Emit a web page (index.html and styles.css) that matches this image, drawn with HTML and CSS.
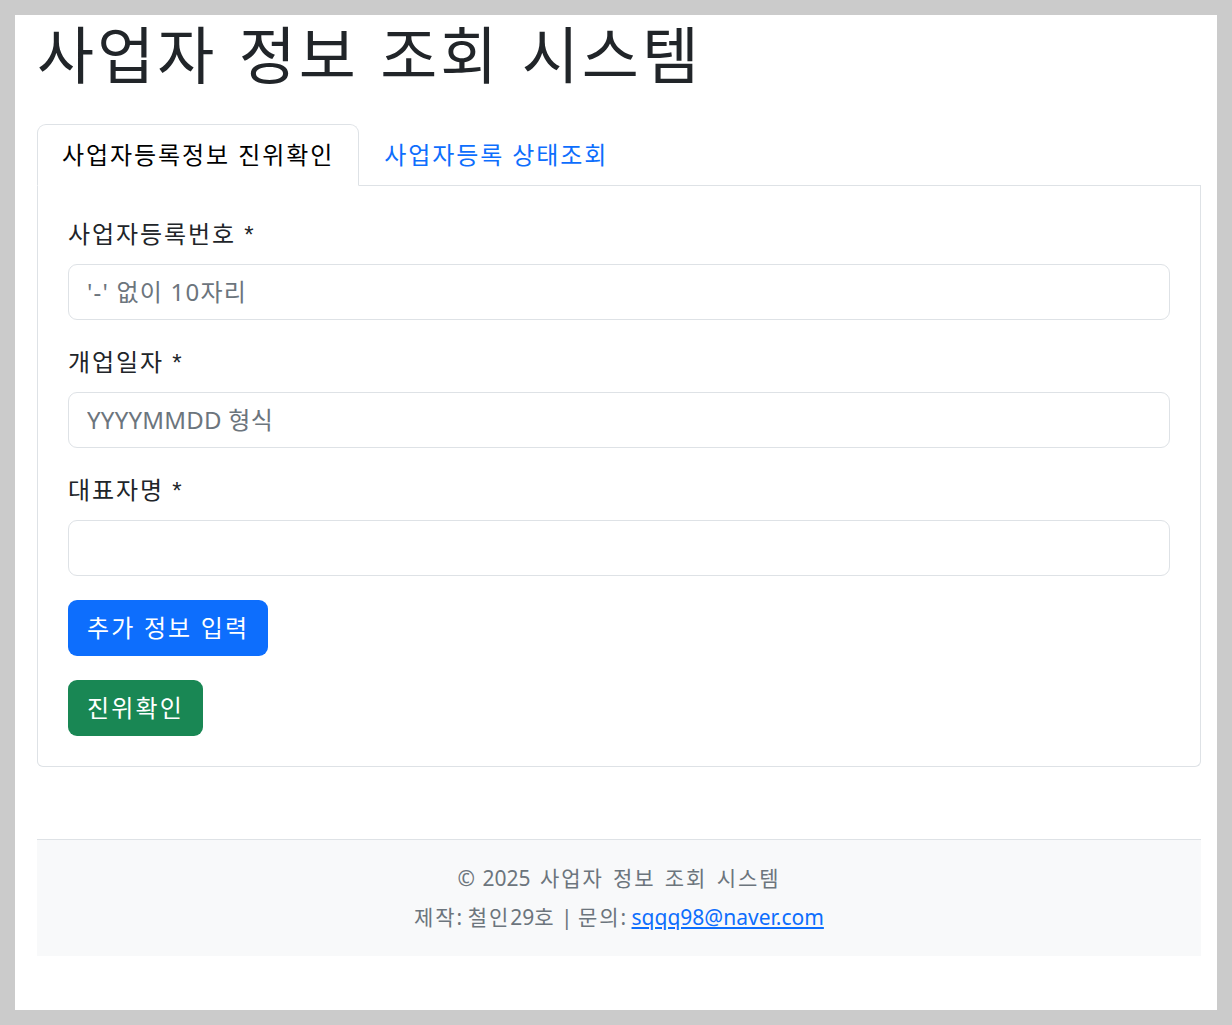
FILE: index.html
```html
<!DOCTYPE html>
<html lang="ko">
<head>
  <meta charset="UTF-8" />
  <title>사업자 정보 조회 시스템</title>
  <link rel="stylesheet" href="styles.css">
</head>
<body>
  <div class="page">
    <div class="container">
      <h1>사업자 정보 조회 시스템</h1>

      <ul class="tabs">
        <li><a class="tab active" href="#verify">사업자등록정보 진위확인</a></li>
        <li><a class="tab" href="#status">사업자등록 상태조회</a></li>
      </ul>

      <div class="tab-content" id="verify">
        <form>
          <div class="field">
            <label for="bno">사업자등록번호 <span class="req">*</span></label>
            <input id="bno" type="text" placeholder="'-' 없이 10자리">
          </div>
          <div class="field">
            <label for="startDt">개업일자 <span class="req">*</span></label>
            <input id="startDt" class="latin-ph" type="text" placeholder="YYYYMMDD 형식">
          </div>
          <div class="field">
            <label for="pName">대표자명 <span class="req">*</span></label>
            <input id="pName" type="text">
          </div>
          <div class="field">
            <button type="button" class="btn btn-primary">추가 정보 입력</button>
          </div>
          <button type="submit" class="btn btn-success">진위확인</button>
        </form>
      </div>

      <footer class="footer">
        <p class="copy"><span class="latin">© 2025</span> 사업자 정보 조회 시스템</p>
        <p>제작<span class="latin">: </span>철인<span class="latin">29</span>호<span class="latin"> | </span>문의<span class="latin">: </span><a class="latin" href="mailto:sqqq98@naver.com">sqqq98@naver.com</a></p>
      </footer>
    </div>
  </div>
</body>
</html>
```

FILE: styles.css
```css
* {
  box-sizing: border-box;
}

body {
  margin: 0;
  background: #cbcbcb;
  font-family: "Noto Sans", "Noto Sans CJK KR", sans-serif;
  color: #212529;
  font-size: 24px;
  line-height: 1.5;
  letter-spacing: 0.08em;
}

.latin {
  letter-spacing: 0;
}

.page {
  margin: 15px;
  width: 1202px;
  height: 995px;
  background: #fff;
}

.container {
  padding: 0 16px 0 22px;
}

h1 {
  margin: 0 0 32px;
  padding-top: 3px;
  font-size: 62px;
  font-weight: 400;
  line-height: 1.2;
  letter-spacing: 0.05em;
  word-spacing: 2px;
}

.tabs {
  display: flex;
  list-style: none;
  margin: 0;
  padding: 0;
  border-bottom: 1px solid #dee2e6;
}

.tab {
  display: block;
  padding: 12px 24px;
  margin-bottom: -1px;
  border: 1px solid transparent;
  border-radius: 9px 9px 0 0;
  color: #0d6efd;
  text-decoration: none;
}

.tab.active {
  color: #000;
  background: #fff;
  border-color: #dee2e6 #dee2e6 #fff;
}

.tab-content {
  border: 1px solid #dee2e6;
  border-top: none;
  border-radius: 0 0 6px 6px;
  padding: 30px;
}

.field {
  margin-bottom: 24px;
}

label {
  display: block;
  margin-bottom: 12px;
  height: 36px;
}

.req {
  font-family: "Liberation Sans", sans-serif;
  line-height: 1;
}

input {
  display: block;
  width: 100%;
  padding: 9px 18px;
  font: inherit;
  line-height: 36px;
  letter-spacing: 0.05em;
  color: #212529;
  border: 1px solid #dee2e6;
  border-radius: 9px;
}

input.latin-ph {
  letter-spacing: 0.01em;
}

input::placeholder {
  color: #6c757d;
}

.btn {
  padding: 9px 18px;
  font: inherit;
  line-height: 36px;
  letter-spacing: 0.09em;
  color: #fff;
  border: 1px solid transparent;
  border-radius: 9px;
  cursor: pointer;
}

.btn-primary {
  background: #0d6efd;
}

.btn-success {
  background: #198754;
}

.footer {
  margin-top: 72px;
  padding: 19px 0;
  background: #f8f9fa;
  border-top: 1px solid #dee2e6;
  text-align: center;
  color: #6c757d;
  font-size: 21px;
}

.footer p {
  margin: 0;
  line-height: 39px;
}

.footer .copy {
  word-spacing: 2px;
}

.footer a {
  color: #0d6efd;
}
```
